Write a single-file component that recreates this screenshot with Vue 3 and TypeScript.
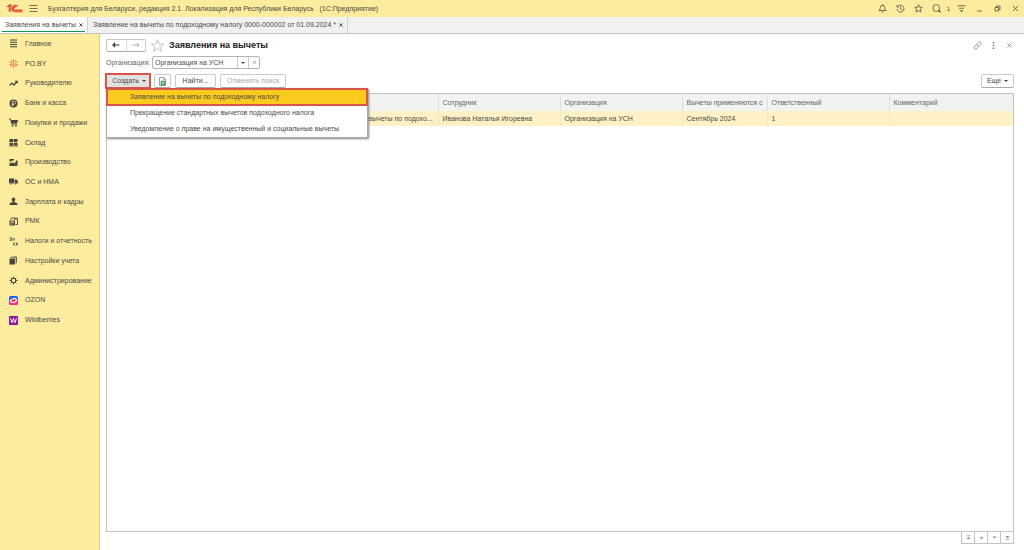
<script setup lang="ts">
import { ref } from 'vue'

interface Section { label: string; icon: string }

const sections: Section[] = [
  { label: 'Главное', icon: '<path d="M2 2h14M2 6.500h14M2 11h14M2 15.500h14" stroke="#46443c" stroke-width="2.200"/>' },
  { label: 'PO.BY', icon: '<g stroke="#dc4a38" stroke-width="1.6" fill="none"><path d="M9 6V1M9 12v5M6 8L1 6M12 8l5-2M7 11l-4 5M11 11l4 5M6 5L4 2M12 5l2-3M1 11h4M13 11h4"/></g><circle cx="9" cy="9" r="2" fill="#e87a4a"/>' },
  { label: 'Руководителю', icon: '<path d="M1 13l5-5 4 4 6-7" fill="none" stroke="#46443c" stroke-width="2.4"/><path d="M11 3.500h6.500v6.500z" fill="#46443c"/>' },
  { label: 'Банк и касса', icon: '<circle cx="9" cy="9" r="8" fill="#46443c"/><path d="M7 14V4.500h3.500a2.500 2.500 0 0 1 0 5.500H5M5 12h5" fill="none" stroke="#faec9f" stroke-width="1.500"/>' },
  { label: 'Покупки и продажи', icon: '<path d="M0 2h3l2.500 10H16" fill="none" stroke="#46443c" stroke-width="1.800"/><path d="M4 4h14l-2 7H5.500z" fill="#46443c"/><circle cx="7" cy="15.500" r="1.800" fill="#46443c"/><circle cx="14" cy="15.500" r="1.800" fill="#46443c"/>' },
  { label: 'Склад', icon: '<path d="M1 2h7.300v6H1zM9.700 2H17v6H9.700zM1 9.500h7.300V15H1zM9.700 9.500H17V15H9.700z" fill="#46443c"/><path d="M0 16h18" stroke="#46443c" stroke-width="1.500"/>' },
  { label: 'Производство', icon: '<path d="M1 16V9l5 2V8l6 3 2-6h3v11z" fill="#46443c"/><path d="M1 2h9v3H5v2H1z" fill="#46443c"/>' },
  { label: 'ОС и НМА', icon: '<path d="M0 3h10v10H0zM11 5h4l3 4v4h-7z" fill="#46443c"/><circle cx="4.500" cy="13.500" r="2.200" fill="#46443c" stroke="#faec9f"/><circle cx="13.500" cy="13.500" r="2.200" fill="#46443c" stroke="#faec9f"/>' },
  { label: 'Зарплата и кадры', icon: '<ellipse cx="9" cy="5" rx="3.500" ry="4.200" fill="#46443c"/><path d="M1 16c0-4 2-5 5-5.500h6c3 .5 5 1.500 5 5.500z" fill="#46443c"/><path d="M7.500 8h3v4h-3z" fill="#46443c"/>' },
  { label: 'РМК', icon: '<path d="M1 7h11v10H1z" fill="#46443c"/><path d="M3 5l2-3h7v4M12 3h5v12h-4" fill="none" stroke="#46443c" stroke-width="1.800"/><path d="M3 9h7v2H3zM3 13h2v2H3zM7 13h2v2H7z" fill="#faec9f"/><path d="M13 1h3v4h-3z" fill="#b5493a"/>' },
  { label: 'Налоги и отчетность', icon: '<g fill="none" stroke="#46443c" stroke-width="1.300"><path d="M1 7h5M2 6l1-5h2v5M8 7V3h2a1.500 1.500 0 0 1 0 3H8M9 11v6M13 11l-3.500 3 3.500 3M15 11v6M15 14h3M18 11v6"/></g>' },
  { label: 'Настройки учета', icon: '<path d="M1 5h11v12H1z" fill="#46443c"/><path d="M2 4l3-3h11v12l-3 3V4z" fill="#6e6a5b"/><path d="M2.500 3.800h10V16" fill="none" stroke="#faec9f" stroke-width=".7"/>' },
  { label: 'Администрирование', icon: '<circle cx="9" cy="9" r="4.500" fill="none" stroke="#46443c" stroke-width="2.200"/><path d="M9 1v3M9 14v3M1 9h3M14 9h3M3.300 3.300l2.200 2.200M12.500 12.500l2.200 2.200M3.300 14.700l2.200-2.200M12.500 5.500l2.200-2.200" stroke="#46443c" stroke-width="2"/>' },
  { label: 'OZON', icon: '<rect width="18" height="18" rx="3.500" fill="#1764f0"/><path d="M0 12l18-5v7.500a3.500 3.500 0 0 1-3.500 3.500h-11A3.500 3.500 0 0 1 0 14.500z" fill="#f5336e"/><ellipse cx="9" cy="9" rx="6" ry="3.600" transform="rotate(-18 9 9)" fill="#e9305f" stroke="#fff" stroke-width="2.400"/>' },
  { label: 'Wildberries', icon: '<rect width="18" height="18" rx="1.500" fill="#8d1a99"/><path d="M3 4.500l3 9 3-9 3 9 3-9" fill="none" stroke="#fff" stroke-width="1.800"/>' },
]

const createOptions = [
  'Заявление на вычеты по подоходному налогу',
  'Прекращение стандартных вычетов подоходного налога',
  'Уведомление о праве на имущественный и социальные вычеты',
]

const columns = ['', '', 'Сотрудник', 'Организация', 'Вычеты применяются с', 'Ответственный', 'Комментарий']
const rows = [
  ['', 'Заявление на вычеты по подохо...', 'Иванова Наталья Игоревна', 'Организация на УСН', 'Сентябрь 2024', '1', ''],
]

const windowTools = [
  { label: 'Уведомления', icon: '<path d="M2 13c2-2 2.500-4 2.500-6a4.500 4.500 0 0 1 9 0c0 2 .5 4 2.500 6zM7 16h4M9 1v2"/>' },
  { label: 'История', icon: '<path d="M3 5.500A7 7 0 1 1 2 10M2 2v4h4M9 5v4.500l3.500 2"/>' },
  { label: 'Избранное', icon: '<path d="M9 1.500l2.200 5 5.300.5-4 3.500 1.200 5.500L9 13.200 4.300 16l1.200-5.500-4-3.500 5.300-.5z"/>' },
  { label: 'Поиск', icon: '<circle cx="8.500" cy="8" r="6.800"/><path d="M13 12.500l4 4" stroke-width="2.400"/>' },
]

const organization = ref('Организация на УСН')
const menuOpen = ref(true)
</script>

<template>
  <div class="app">
    <header class="titlebar">
      <svg class="logo" viewBox="0 0 32 20" aria-label="1C"><g fill="none" stroke="#d93a2b" stroke-width="2"><path d="M2 7l4-3v12M9 16V3L4 5"/><path d="M22 6a6 6 0 1 0-5 10h14M19 8a3 3 0 1 0-2 5h14"/></g></svg>
      <button class="flat" aria-label="Меню"><svg class="icon line" viewBox="0 0 18 18"><path d="M1 3h16M1 9h16M1 15h16" /></svg></button>
      <span class="caption">Бухгалтерия для Беларуси, редакция 2.1. Локализация для Республики Беларусь&nbsp;&nbsp; (1С:Предприятие)</span>
      <div class="tools">
        <button v-for="tool in windowTools" :key="tool.label" class="flat" :aria-label="tool.label">
          <svg class="icon line" viewBox="0 0 18 18" v-html="tool.icon"></svg>
        </button>
        <span class="count">1</span>
        <button class="flat" aria-label="Настройка"><svg class="icon line" viewBox="0 0 18 18"><path d="M1 3.500h16M4 8.500h10" /><path d="M6 12.500h6l-3 4z" fill="#46443c" stroke="none" /></svg></button>
        <button class="flat" aria-label="Свернуть"><svg class="icon line" viewBox="0 0 18 18"><path d="M4 14h10" /></svg></button>
        <button class="flat" aria-label="Восстановить"><svg class="icon line" viewBox="0 0 18 18"><path d="M4 7h7v7H4zM7 7V4h7v7h-3" /></svg></button>
        <button class="flat" aria-label="Закрыть"><svg class="icon line" viewBox="0 0 18 18"><path d="M4 4l10 10M14 4L4 14" /></svg></button>
      </div>
    </header>

    <nav class="tabs" aria-label="Открытые окна">
      <div class="tab active"><a href="#list">Заявления на вычеты</a><button class="flat close" aria-label="Закрыть вкладку"><svg viewBox="0 0 10 10"><path d="M1 1l8 8M9 1L1 9" /></svg></button></div>
      <div class="tab"><a href="#document">Заявление на вычеты по подоходному налогу 0000-000002 от 01.09.2024 *</a><button class="flat close" aria-label="Закрыть вкладку"><svg viewBox="0 0 10 10"><path d="M1 1l8 8M9 1L1 9" /></svg></button></div>
    </nav>

    <div class="body">
      <nav class="sidebar" aria-label="Разделы">
        <ul>
          <li v-for="section in sections" :key="section.label">
            <a href="#section"><svg class="icon" viewBox="0 0 18 18" v-html="section.icon"></svg>{{ section.label }}</a>
          </li>
        </ul>
      </nav>

      <main id="list">
        <div class="heading">
          <div class="history">
            <button aria-label="Назад"><svg viewBox="0 0 16 10"><path d="M15 5H3M6 1L2 5l4 4" /></svg></button>
            <button class="disabled" aria-label="Вперед"><svg viewBox="0 0 16 10"><path d="M1 5h12M10 1l4 4-4 4" /></svg></button>
          </div>
          <button class="flat star" aria-label="В избранное"><svg viewBox="0 0 18 18"><path d="M9 1l2.200 5.800 6.300.2-5 3.800 1.800 6L9 13.300l-5.300 3.500 1.800-6L.500 7l6.300-.2z" /></svg></button>
          <h1>Заявления на вычеты</h1>
          <div class="form-tools">
            <button class="flat" aria-label="Ссылка"><svg class="icon line" viewBox="0 0 18 18"><path d="M8 5l2.500-2.500a3 3 0 0 1 4.500 4.500L12 10a3 3 0 0 1-4.500 0M10 13l-2.500 2.500A3 3 0 0 1 3 11l3-3a3 3 0 0 1 4.500 0" /></svg></button>
            <button class="flat" aria-label="Еще действия"><svg class="icon dots" viewBox="0 0 18 18"><path d="M7.500 2h3v3h-3zM7.500 7.500h3v3h-3zM7.500 13h3v3h-3z" /></svg></button>
            <button class="flat" aria-label="Закрыть форму"><svg class="icon line" viewBox="0 0 18 18"><path d="M5 5l8 8M13 5l-8 8" /></svg></button>
          </div>
        </div>

        <div class="filter">
          <label for="organization">Организация:</label>
          <div class="combo">
            <input id="organization" v-model="organization" type="text" />
            <button aria-label="Выбрать"><i class="caret"></i></button>
            <button aria-label="Очистить" @click="organization = ''"><svg viewBox="0 0 10 10"><path d="M2 2l6 6M8 2L2 8" /></svg></button>
          </div>
        </div>

        <div class="commands">
          <div class="create">
            <button class="command pressed" :aria-expanded="menuOpen" @click="menuOpen = !menuOpen">Создать<i class="caret"></i></button>
            <div v-if="menuOpen" class="menu" role="menu">
              <button v-for="(option, index) in createOptions" :key="option" role="menuitem" :class="{ current: index === 0 }">{{ option }}</button>
            </div>
          </div>
          <button class="command copy" aria-label="Скопировать"><svg viewBox="0 0 18 18"><path d="M3 1h8l4 4v12H3z" fill="#fff" stroke="#777" stroke-width="1.400" /><path d="M11 1v4h4" fill="none" stroke="#777" /><circle cx="10" cy="12" r="5" fill="#269344" /><path d="M10 9v6M7 12h6" stroke="#fff" stroke-width="1.600" /></svg></button>
          <button class="command find">Найти...</button>
          <button class="command cancel" disabled>Отменить поиск</button>
          <button class="command more">Еще<i class="caret"></i></button>
        </div>

        <div class="grid">
          <table>
            <colgroup><col class="c-first" /><col class="c-kind" /><col class="c-mid" /><col class="c-mid" /><col class="c-date" /><col class="c-mid" /><col /></colgroup>
            <thead><tr><th v-for="(column, index) in columns" :key="index" scope="col">{{ column }}</th></tr></thead>
            <tbody><tr v-for="(row, index) in rows" :key="index"><td v-for="(cell, position) in row" :key="position">{{ cell }}</td></tr></tbody>
          </table>
        </div>
        <div class="pager">
          <button aria-label="В начало"><svg viewBox="0 0 10 10"><path d="M1 1h8v1.500H1zM5 4l4 4H1z" /></svg></button>
          <button aria-label="Вверх"><svg viewBox="0 0 10 10"><path d="M5 3l4 4H1z" /></svg></button>
          <button aria-label="Вниз"><svg viewBox="0 0 10 10"><path d="M5 7L1 3h8z" /></svg></button>
          <button aria-label="В конец"><svg viewBox="0 0 10 10"><path d="M5 6L1 2h8zM1 7.500h8V9H1z" /></svg></button>
        </div>
      </main>
    </div>
  </div>
</template>

<style>
body { margin: 0; }
</style>

<style scoped>
.app {
  display: flex;
  flex-direction: column;
  min-height: 100vh;
  background: #fff;
  color: #4c4a45;
  font: 7px/10px "Liberation Sans", Arial, sans-serif;
}
.app *, .app *::before { box-sizing: border-box; }
button, input { margin: 0; padding: 0; font: inherit; color: inherit; }
a { color: inherit; text-decoration: none; }
svg { display: block; fill: none; }
.flat { display: flex; align-items: center; justify-content: center; border: 0; background: none; }
.icon { width: 9px; height: 9px; flex: none; }
.line { stroke: #46443c; stroke-width: 1.5; }
.caret { border: 2px solid transparent; border-top-color: #444; border-bottom: 0; }

.titlebar { display: flex; align-items: center; height: 17px; padding: 0 4px 0 6px; background: #fbec9e; }
.logo { width: 17px; height: 11px; margin-right: 6px; }
.caption { margin-left: 10px; white-space: nowrap; }
.tools { display: flex; align-items: center; margin-left: auto; gap: 9px; }
.tools .count { margin: 0 -2px 0 -3px; font-size: 6px; }

.tabs { display: flex; height: 17px; border-bottom: 1px solid #c4c4c4; background: #f1f1f1; }
.tab { display: flex; align-items: center; gap: 3px; padding: 0 4px 0 5px; border-right: 1px solid #cfcfcf; white-space: nowrap; }
.tab.active { position: relative; background: #fff; }
.tab.active::before { content: ""; position: absolute; left: 2px; right: 2px; bottom: 1px; height: 1px; background: #0b9a50; }
.close svg { width: 4px; height: 4px; stroke: #333; stroke-width: 2; }

.body { display: flex; flex: 1; }
.sidebar { flex: none; width: 100px; border-right: 1px solid #d8cc8c; background: #fbec9e; }
.sidebar ul { display: grid; grid-auto-rows: 1fr; height: 296px; margin: 0; padding: 0; list-style: none; }
.sidebar a { display: flex; align-items: center; gap: 7px; height: 100%; padding-left: 9px; white-space: nowrap; }

main { display: flex; flex: 1; flex-direction: column; min-width: 0; padding: 4px 10px 6px 6px; }
.heading { display: flex; align-items: center; height: 14px; }
.history { display: flex; width: 40px; height: 13px; border: 1px solid #c6c6c6; border-bottom-color: #aaa; border-radius: 2px; }
.history button { display: flex; flex: 1; align-items: center; justify-content: center; border: 0; background: #fff; }
.history button + button { border-left: 1px solid #d6d6d6; }
.history svg { width: 8px; height: 6px; stroke: #333; stroke-width: 2.4; }
.history .disabled svg { stroke: #999; stroke-width: 1.6; }
.star { margin: 0 5px; }
.star svg { width: 13px; height: 13px; stroke: #aaa; }
h1 { margin: 0; color: #222; font-size: 9px; line-height: 14px; white-space: nowrap; }
.form-tools { display: flex; gap: 7px; margin-left: auto; }
.form-tools .line { stroke: #777; }
.dots { fill: #777; }

.filter { display: flex; align-items: center; margin-top: 4px; height: 13px; }
.filter label { width: 46px; color: #666; white-space: nowrap; }
.combo { display: flex; width: 108px; height: 13px; border: 1px solid #b4b4b4; border-radius: 2px; }
.combo input { flex: 1; min-width: 0; padding-left: 2px; border: 0; outline: 0; background: transparent; }
.combo button { display: flex; align-items: center; justify-content: center; width: 11px; border: 0; border-left: 1px solid #ccc; background: none; }
.combo svg { width: 5px; height: 5px; stroke: #777; }

.commands { display: flex; gap: 4px; margin-top: 5px; }
.command { display: flex; align-items: center; justify-content: center; gap: 3px; height: 14px; border: 1px solid #cacaca; border-bottom-color: #aaa; border-radius: 2px; background: #fff; white-space: nowrap; }
.create { position: relative; }
.pressed { width: 44px; padding-left: 2px; border-color: #d95549; border-radius: 0; background: #e2e2e2; outline: 1px solid #d95549; }
.copy { width: 17px; }
.copy svg { width: 9px; height: 9px; }
.find { width: 41px; }
.cancel { width: 66px; color: #aaa; }
.more { width: 33px; margin-left: auto; }
.menu { position: absolute; z-index: 1; top: 14px; left: 0; display: grid; width: 262px; border: 1px solid #a8a8a8; background: #fff; box-shadow: 1px 1px 2px #888; }
.menu button { height: 16px; padding-left: 23px; border: 0; background: #fff; text-align: left; white-space: nowrap; }
.menu .current { z-index: 1; background: #fccb1d; outline: 2px solid #d95549; outline-offset: -1px; }

.grid { flex: 1; margin-top: 5px; border: 1px solid #c3c3c3; }
table { width: 100%; border-collapse: collapse; table-layout: fixed; }
th, td { overflow: hidden; padding: 0 0 0 4px; border-right: 1px solid #dedede; font-weight: normal; text-align: left; white-space: nowrap; }
th { height: 17px; background: #f2f2f2; color: #666; }
td { height: 15px; border-color: #f8e8b8; background: #fef1c6; }
th:last-child, td:last-child { border-right: 0; }
td:nth-child(2) { padding: 0 8px 0 0; text-align: right; }
.c-first { width: 214px; }
.c-kind { width: 117px; }
.c-mid { width: 122px; }
.c-date { width: 85px; }
.pager { display: flex; align-self: flex-end; border-left: 1px solid #c3c3c3; }
.pager button { display: flex; align-items: center; justify-content: center; width: 13px; height: 12px; border: 0 solid #c3c3c3; border-width: 0 1px 1px 0; background: #fff; }
.pager svg { width: 5px; height: 5px; fill: #888; }
</style>
